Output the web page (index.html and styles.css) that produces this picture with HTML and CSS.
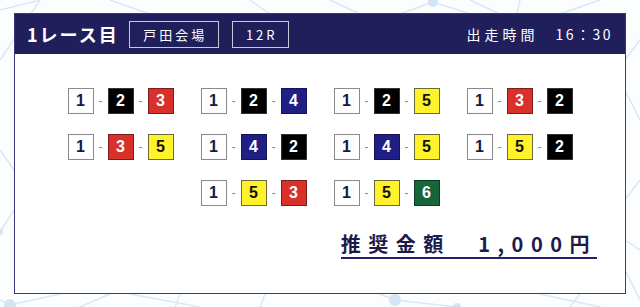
FILE: index.html
```html
<!DOCTYPE html>
<html lang="ja">
<head>
<meta charset="utf-8">
<link rel="stylesheet" href="styles.css">
</head>
<body>
<svg class="bg" width="640" height="307" viewBox="0 0 640 307" aria-hidden="true">
  <g stroke="#dbe7f3" stroke-width="1.5" fill="none">
    <line x1="0" y1="10" x2="40" y2="0"/>
    <line x1="40" y1="0" x2="0" y2="60"/>
    <line x1="110" y1="0" x2="150" y2="14"/>
    <line x1="250" y1="0" x2="270" y2="14"/>
    <line x1="330" y1="0" x2="360" y2="14"/>
    <line x1="433" y1="2" x2="400" y2="14"/>
    <line x1="433" y1="2" x2="470" y2="14"/>
    <line x1="470" y1="0" x2="500" y2="14"/>
    <line x1="520" y1="0" x2="517" y2="14"/>
    <line x1="560" y1="14" x2="600" y2="0"/>
    <line x1="625" y1="60" x2="640" y2="40"/>
    <line x1="625" y1="90" x2="640" y2="120"/>
    <line x1="625" y1="200" x2="640" y2="180"/>
    <line x1="625" y1="240" x2="640" y2="250"/>
    <line x1="625" y1="270" x2="640" y2="300"/>
    <line x1="0" y1="150" x2="14" y2="170"/>
    <line x1="0" y1="232" x2="14" y2="210"/>
    <line x1="0" y1="300" x2="10" y2="305"/>
    <line x1="10" y1="305" x2="60" y2="294"/>
    <line x1="80" y1="307" x2="110" y2="294"/>
    <line x1="130" y1="294" x2="200" y2="307"/>
    <line x1="180" y1="294" x2="175" y2="307"/>
    <line x1="260" y1="307" x2="265" y2="294"/>
    <line x1="395" y1="300" x2="457" y2="307"/>
    <line x1="395" y1="300" x2="380" y2="294"/>
    <line x1="540" y1="294" x2="600" y2="307"/>
    <line x1="580" y1="294" x2="570" y2="307"/>
  </g>
  <g fill="#d3e4f4">
    <circle cx="433" cy="2" r="5"/>
    <circle cx="10" cy="305" r="6"/>
    <circle cx="395" cy="300" r="6"/>
    <circle cx="457" cy="307" r="4"/>
    <circle cx="0" cy="232" r="3"/>
  </g>
</svg>

<div class="card">
  <header class="head">
    <h1 class="title">1レース目</h1>
    <span class="tag tag-place">戸田会場</span>
    <span class="tag tag-race">12R</span>
    <span class="time">出走時間<span class="clock">16：30</span></span>
  </header>

  <div class="body">
    <div class="combos">
      <div class="combo"><span class="n n1">1</span><span class="dash">-</span><span class="n n2">2</span><span class="dash">-</span><span class="n n3">3</span></div>
      <div class="combo"><span class="n n1">1</span><span class="dash">-</span><span class="n n2">2</span><span class="dash">-</span><span class="n n4">4</span></div>
      <div class="combo"><span class="n n1">1</span><span class="dash">-</span><span class="n n2">2</span><span class="dash">-</span><span class="n n5">5</span></div>
      <div class="combo"><span class="n n1">1</span><span class="dash">-</span><span class="n n3">3</span><span class="dash">-</span><span class="n n2">2</span></div>
      <div class="combo"><span class="n n1">1</span><span class="dash">-</span><span class="n n3">3</span><span class="dash">-</span><span class="n n5">5</span></div>
      <div class="combo"><span class="n n1">1</span><span class="dash">-</span><span class="n n4">4</span><span class="dash">-</span><span class="n n2">2</span></div>
      <div class="combo"><span class="n n1">1</span><span class="dash">-</span><span class="n n4">4</span><span class="dash">-</span><span class="n n5">5</span></div>
      <div class="combo"><span class="n n1">1</span><span class="dash">-</span><span class="n n5">5</span><span class="dash">-</span><span class="n n2">2</span></div>
      <div class="combo"><span class="n n1">1</span><span class="dash">-</span><span class="n n5">5</span><span class="dash">-</span><span class="n n3">3</span></div>
      <div class="combo"><span class="n n1">1</span><span class="dash">-</span><span class="n n5">5</span><span class="dash">-</span><span class="n n6">6</span></div>
    </div>

    <div class="amount-row">
      <p class="amount">推奨金額　1,000円</p>
    </div>
  </div>
</div>
</body>
</html>
```

FILE: styles.css
```css
* { box-sizing: border-box; }

html, body {
  margin: 0;
  padding: 0;
}

body {
  width: 640px;
  height: 307px;
  overflow: hidden;
  background: #fbfdff;
  font-family: "Noto Sans CJK JP", "Noto Sans", sans-serif;
  position: relative;
  padding-top: 13px;
  padding-left: 14px;
}

.bg {
  position: absolute;
  left: 0;
  top: 0;
  z-index: 0;
}

.card {
  position: relative;
  z-index: 1;
  width: 612px;
  height: 281px;
  background: #fff;
  border: 1px solid #3a3878;
  display: flex;
  flex-direction: column;
}

.head {
  height: 40px;
  background: #211f5b;
  display: flex;
  align-items: center;
  padding: 0 12px 0 12px;
  color: #fff;
}

.title {
  margin: 0;
  font-size: 18px;
  font-weight: 700;
  letter-spacing: 2px;
  line-height: 1;
  margin-right: 10px;
}

.tag {
  height: 27px;
  border: 1.5px solid #c9c9d6;
  display: flex;
  align-items: center;
  justify-content: center;
  font-size: 13px;
  letter-spacing: 3px;
  line-height: 1;
}

.tag-place {
  width: 90px;
  padding-left: 3px;
  margin-right: 13px;
}

.tag-race {
  width: 57px;
  padding-left: 3px;
}

.time {
  margin-left: auto;
  font-size: 14px;
  letter-spacing: 4px;
  line-height: 1;
}

.clock {
  margin-left: 17px;
  letter-spacing: 2.5px;
}

.body {
  flex: 1;
  display: flex;
  flex-direction: column;
  padding-top: 34px;
}

.combos {
  width: 507px;
  margin: 0 auto;
  display: flex;
  flex-wrap: wrap;
  justify-content: center;
  column-gap: 27px;
  row-gap: 20px;
}

.combo {
  display: flex;
  align-items: center;
  width: 106px;
}

.n {
  width: 26px;
  height: 26px;
  display: flex;
  align-items: center;
  justify-content: center;
  font-family: "Liberation Sans", Arial, sans-serif;
  font-weight: 700;
  font-size: 16px;
  line-height: 1;
  border: 1px solid #555;
}

.dash {
  width: 14px;
  text-align: center;
  color: #888;
  font-family: "Liberation Sans", Arial, sans-serif;
  font-size: 12px;
}

.n1 { background: #fff; color: #111a4a; border-color: #8a8a8a; }
.n2 { background: #000; color: #fff; border-color: #333; }
.n3 { background: #d9302a; color: #fff; border-color: #7a1d1a; }
.n4 { background: #1f1f86; color: #fff; border-color: #141455; }
.n5 { background: #fff22a; color: #111; border-color: #6a6a3a; }
.n6 { background: #17663a; color: #fff; border-color: #0d3d22; }

.amount-row {
  display: flex;
  justify-content: flex-end;
  padding-right: 28px;
  margin-top: 24px;
}

.amount {
  margin: 0;
  font-size: 20px;
  font-weight: 700;
  letter-spacing: 7.5px;
  color: #1c1b4c;
  line-height: 27px;
  border-bottom: 2.5px solid #24226a;
}
```
